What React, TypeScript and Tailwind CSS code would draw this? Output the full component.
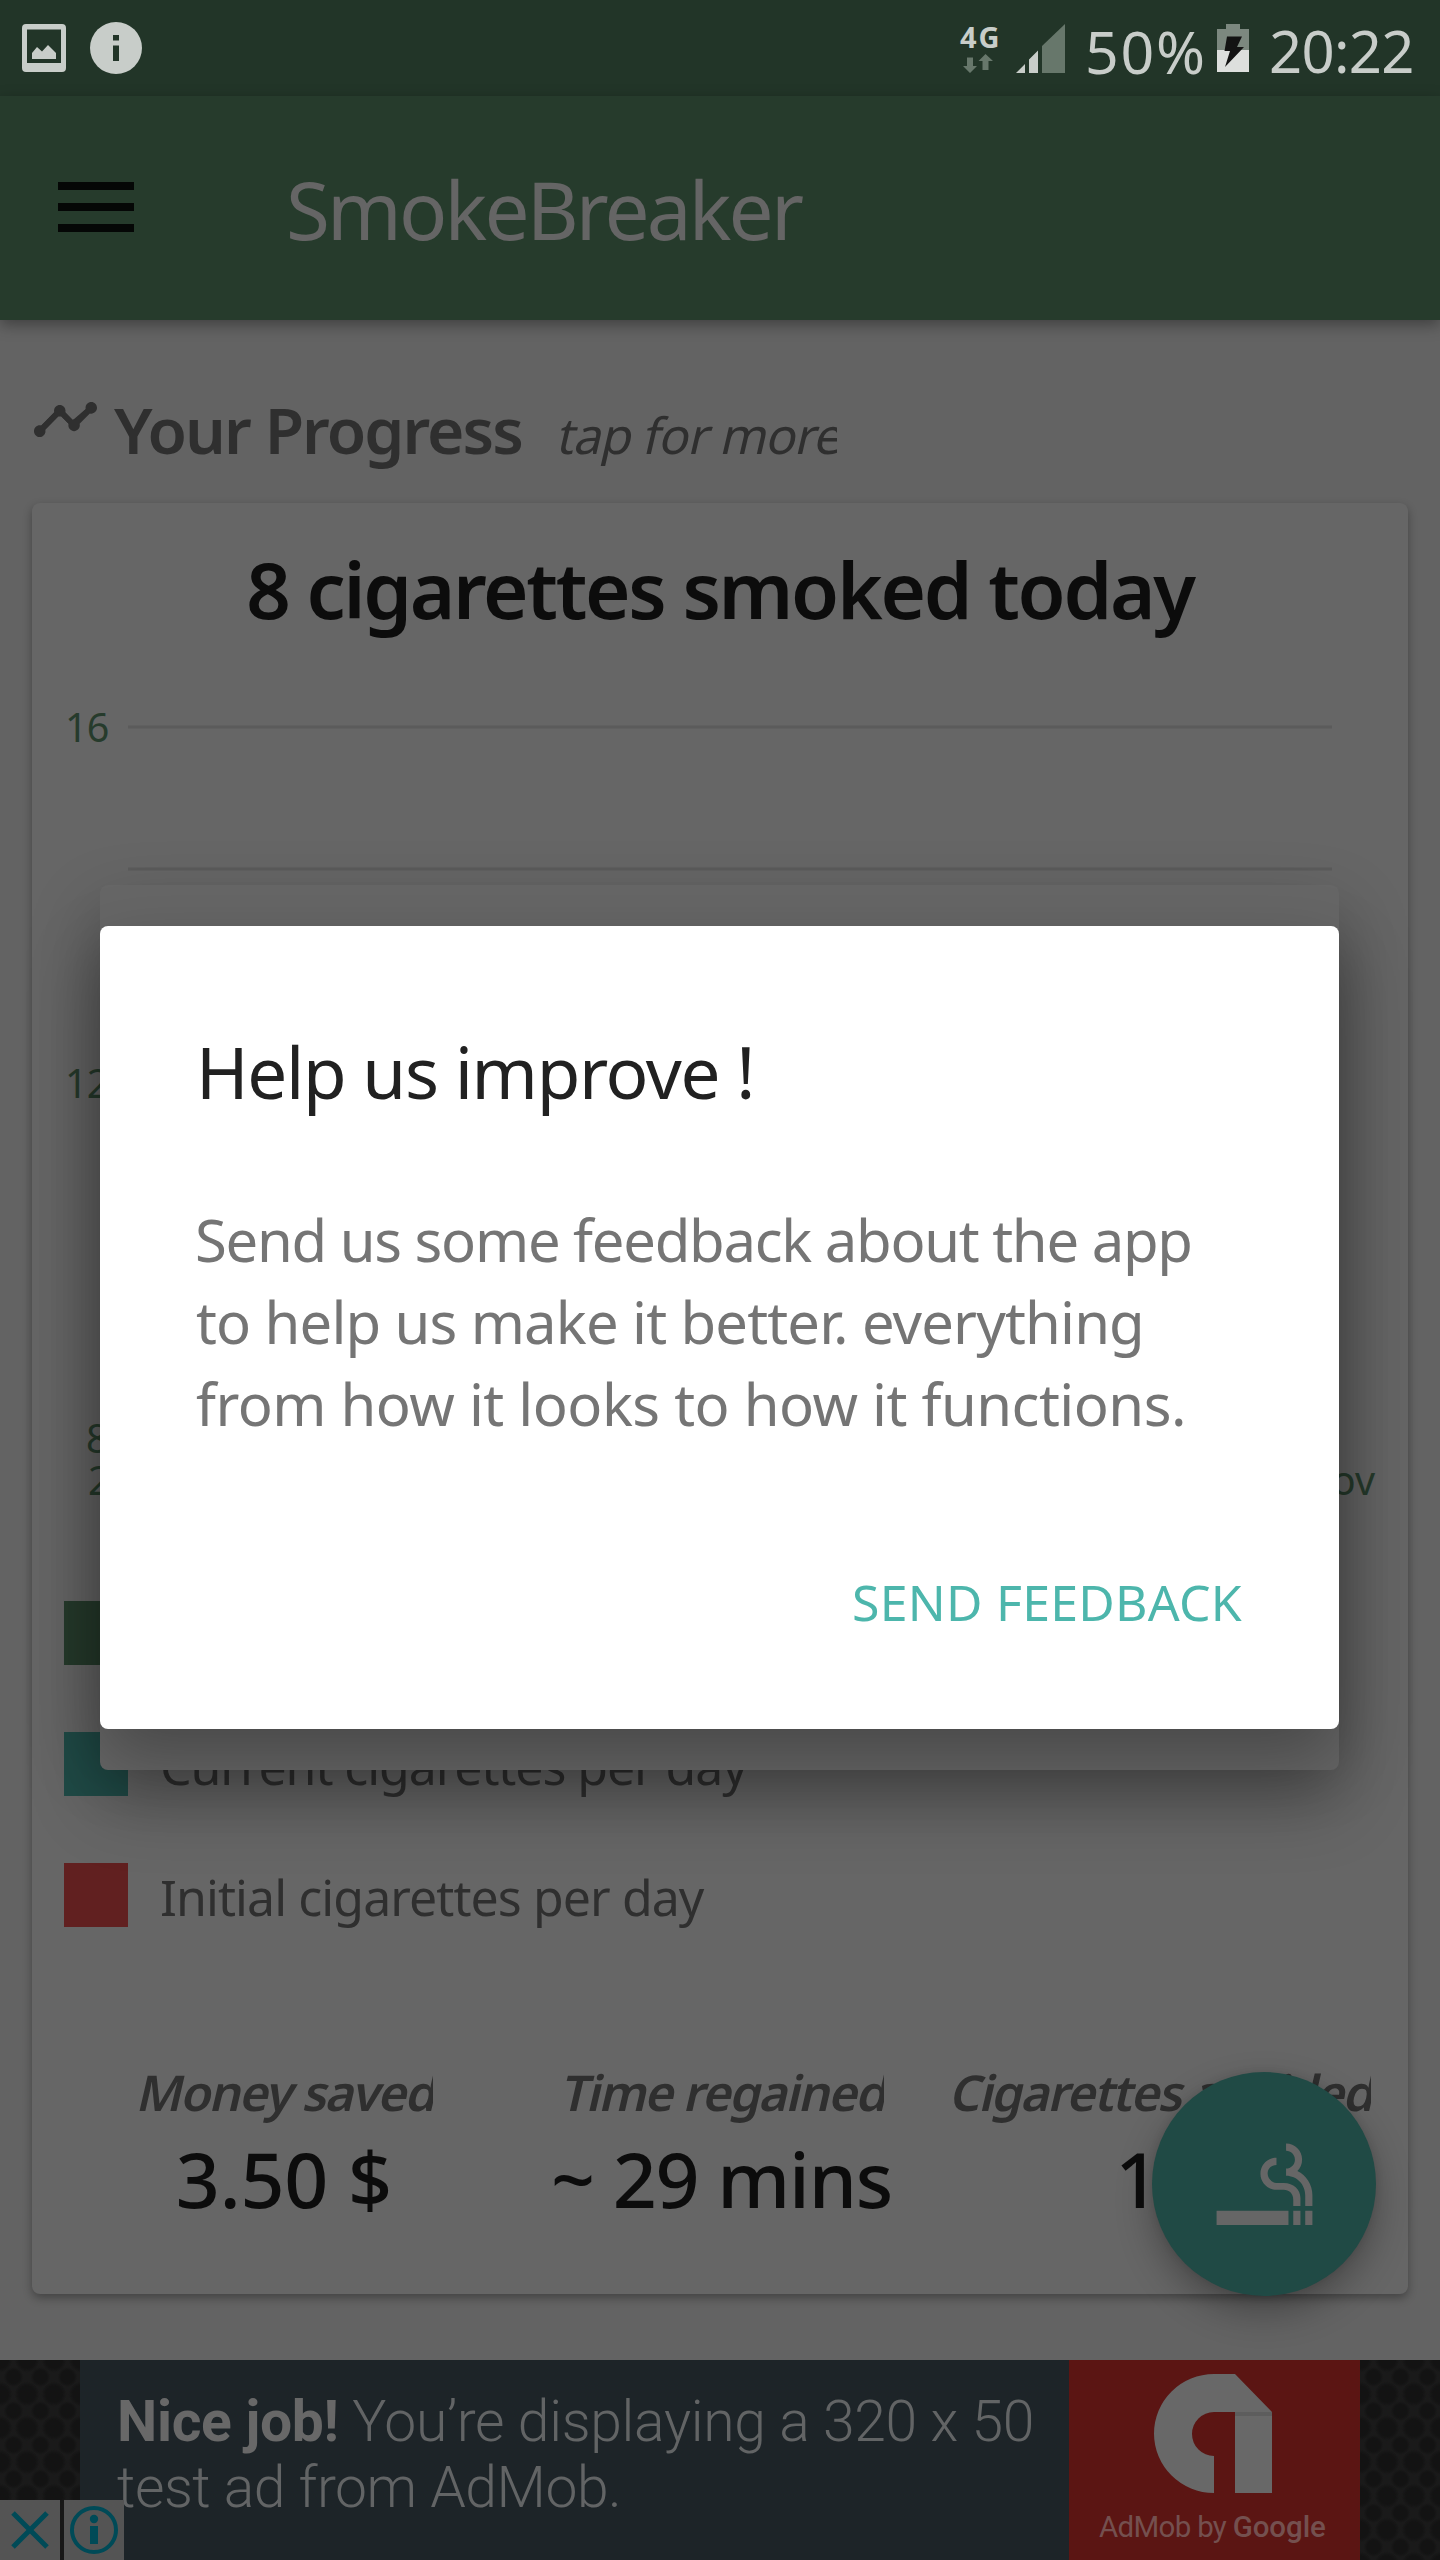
import React from "react";

function StatusBar() {
  return (
    <header className="flex h-24 items-center bg-[#223528] text-[#c8cdc9]">
      <svg className="ml-[22px] h-12 w-11" viewBox="0 0 44 48" fill="currentColor">
        <path
          fillRule="evenodd"
          d="M4 0H40Q44 0 44 4V44Q44 48 40 48H4Q0 48 0 44V4Q0 0 4 0ZM5 5.500V39H39V5.500Z"
        />
        <path d="M10 35V29L15 23L20 27.500L26 21L34 29V35Z" />
      </svg>
      <svg className="ml-6 h-[52px] w-[52px]" viewBox="0 0 52 52">
        <circle cx="26" cy="26" r="26" fill="currentColor" />
        <path d="M23 13h6v5.500h-6zM23 23.500h6V39h-6z" fill="#223528" />
      </svg>
      <div className="ml-auto flex items-center">
        <div className="flex w-[40px] flex-col">
          <span className="mt-[2px] text-[29px] leading-[26px] font-bold tracking-[2px]">4G</span>
          <svg className="mt-1 ml-[3px] h-5 w-[31px]" viewBox="0 0 31 20" fill="#67776b">
            <path d="M4 3.500h6V12h4L7 19L0 12h4zM19.500 16h6V7h4.500L22.500 0L15.500 7h4z" />
          </svg>
        </div>
        <svg className="ml-4 h-[49px] w-[49px]" viewBox="0 0 49 49">
          <path d="M0 49L9 40V49ZM13 49V35.500L22 26.500V49Z" fill="#c8cdc9" />
          <path d="M26 49V22L49 0V49Z" fill="#67776b" />
        </svg>
        <span className="mt-[5px] ml-[20px] w-[129px] text-[59px] leading-[80px] tracking-[1.800px]">50%</span>
        <svg className="ml-[3px] h-12 w-8" viewBox="0 0 32 48">
          <path d="M0 5H9V0H23V5H32V27H0Z" fill="#7c887f" />
          <path d="M0 26H32V48H0Z" fill="#dddfdd" />
          <path d="M10 12.500H25L20 23H27L8 43L13 27H7.500Z" fill="#131313" />
        </svg>
        <span className="mt-[5px] ml-[20px] w-[171px] text-[58px] leading-[80px] tracking-[-0.700px]">20:22</span>
      </div>
    </header>
  );
}

function AppBar() {
  return (
    <div className="relative z-10 flex h-56 items-center bg-[#263b2c] shadow-[0_5px_14px_rgba(0,0,0,0.35)]">
      <div className="mb-[2px] ml-[58px] flex flex-col gap-[13px]">
        <span className="h-2 w-[76px] bg-[#050706]" />
        <span className="h-2 w-[76px] bg-[#050706]" />
        <span className="h-2 w-[76px] bg-[#050706]" />
      </div>
      <h1 className="mt-[2px] ml-[152px] text-[80px] leading-[110px] tracking-[-2.850px] text-[#656565]">
        SmokeBreaker
      </h1>
    </div>
  );
}

function ProgressHeading() {
  return (
    <div className="flex h-[183px] items-start pl-[34px] pt-[68px] text-[#2f2f2f]">
      <svg className="mt-[14px] h-[35px] w-[63px]" viewBox="1 6 22 12" preserveAspectRatio="none" fill="currentColor">
        <g stroke="currentColor" strokeWidth="0.5">
          <path d="M3 16L10 9L14.500 13.500L21 8" fill="none" strokeWidth="1.900" />
        </g>
        <path d="M23 8c0 1.100-.9 2-2 2-.18 0-.35-.02-.51-.07l-3.560 3.550c.05.16.07.34.07.52 0 1.100-.9 2-2 2s-2-.9-2-2c0-.18.02-.36.07-.52l-2.550-2.550c-.16.05-.34.07-.52.07s-.36-.02-.52-.07l-4.550 4.560c.05.16.07.33.07.51 0 1.100-.9 2-2 2s-2-.9-2-2 .9-2 2-2c.18 0 .35.02.51.07l4.560-4.550C8.020 9.360 8 9.180 8 9c0-1.100.9-2 2-2s2 .9 2 2c0 .18-.02.36-.07.52l2.550 2.550c.16-.05.34-.07.52-.07s.36.02.52.07l3.550-3.560C19.020 8.350 19 8.180 19 8c0-1.100.9-2 2-2s2 .9 2 2z" />
      </svg>
      <h2 className="mt-[2px] ml-[17px] w-[412px] text-[64px] leading-[80px] font-semibold tracking-[-1.900px] whitespace-nowrap">
        Your Progress
      </h2>
      <div className="mt-[15px] ml-[29px] w-[282px] overflow-hidden whitespace-nowrap">
        <span className="inline-block origin-[50%_80%] -skew-x-[13deg] text-[50px] leading-[64px] tracking-[-0.950px]">
          tap for more
        </span>
      </div>
    </div>
  );
}

function Chart() {
  return (
    <svg
      className="block h-[962px] w-full text-[39.5px]"
      viewBox="32 639 1376 962"
      fill="#263b2c"
      fontFamily="'Noto Sans', sans-serif"
    >
      <path d="M128 727H1332M128 869H1332" stroke="#5b5b5b" strokeWidth="3" />
      <text x="65" y="742" letterSpacing="-0.9">16</text>
      <text x="65" y="1098" letterSpacing="-0.9">12</text>
      <text x="86" y="1453">8</text>
      <text x="88" y="1495">2</text>
      <text x="1375" y="1495" textAnchor="end">ov</text>
    </svg>
  );
}

function Legend() {
  return (
    <div className="flex flex-col gap-[67px] pl-8 text-[50px] leading-[64px] whitespace-nowrap text-[#2f2f2f]">
      <div className="h-16 w-16 bg-[#263b2c]" />
      <div className="flex h-16 items-center">
        <span className="h-16 w-16 bg-[#204b47]" />
        <span className="mt-[3px] ml-8 tracking-[-1.080px]">Current cigarettes per day</span>
      </div>
      <div className="flex h-16 items-center">
        <span className="h-16 w-16 bg-[#612020]" />
        <span className="mt-[3px] ml-8 tracking-[-0.920px]">Initial cigarettes per day</span>
      </div>
    </div>
  );
}

function StatLabel({ children }: { children: React.ReactNode }) {
  return (
    <div className="overflow-hidden whitespace-nowrap text-[#2f2f2f]">
      <span className="inline-block origin-[50%_80%] -skew-x-[13deg] text-[49.5px] leading-[64px] font-semibold tracking-[-1.650px]">
        {children}
      </span>
    </div>
  );
}

function Stats() {
  return (
    <div className="mt-[133px] ml-[33px] grid w-[1313px] grid-cols-3 gap-y-0 text-[#0c0c0c]">
      <div className="flex flex-col items-center">
        <StatLabel>Money saved</StatLabel>
        <span className="mt-[6px] text-[77px] leading-[98px] font-medium tracking-[-0.200px] whitespace-nowrap">
          3.50 $
        </span>
      </div>
      <div className="flex flex-col items-center">
        <StatLabel>Time regained</StatLabel>
        <span className="mt-[6px] text-[77px] leading-[98px] font-medium tracking-[-1.150px] whitespace-nowrap">
          ~ 29 mins
        </span>
      </div>
      <div className="flex flex-col items-center">
        <StatLabel>Cigarettes avoided</StatLabel>
        <span className="mt-[6px] w-[88px] text-[77px] leading-[98px] font-medium">1</span>
      </div>
    </div>
  );
}

function Fab() {
  return (
    <button className="absolute top-[2072px] left-[1152px] flex h-56 w-56 items-center justify-center rounded-full bg-[#204a45] shadow-[0_16px_36px_rgba(0,0,0,0.3),0_0_8px_rgba(0,0,0,0.1)]">
      <svg className="mt-[15px] h-[115px] w-[115px]" viewBox="0 0 24 24" fill="#666666">
        <path d="M2 16h15v3H2zM20.500 16H22v3h-1.500zM18 16h1.500v3H18zM18.850 7.730c.62-.61 1-1.450 1-2.380C19.850 3.500 18.350 2 16.500 2v1.500c1.020 0 1.850.83 1.850 1.850S17.520 7.200 16.500 7.200v1.500c2.240 0 4 1.830 4 4.070V15H22v-2.240c0-2.220-1.280-4.140-3.150-5.030zM16.030 10.200H14.500c-1.020 0-1.850-.98-1.850-2s.83-1.750 1.850-1.750v-1.500c-1.850 0-3.350 1.500-3.350 3.350s1.500 3.350 3.350 3.350h1.530c1.050 0 1.970.74 1.970 2.050V15h1.500v-1.640c0-1.810-1.460-3.160-3.470-3.160z" />
      </svg>
    </button>
  );
}

function Texture() {
  return (
    <div className="h-full w-20 bg-[#1a1a1a] bg-[radial-gradient(circle_at_50%_50%,#131313_0,#131313_30%,transparent_46%),radial-gradient(circle_at_0_0,#131313_0,#131313_19%,transparent_29%),radial-gradient(circle_at_100%_0,#131313_0,#131313_19%,transparent_29%),radial-gradient(circle_at_0_100%,#131313_0,#131313_19%,transparent_29%),radial-gradient(circle_at_100%_100%,#131313_0,#131313_19%,transparent_29%)] bg-[length:27px_34px]" />
  );
}

function AdBanner() {
  return (
    <div className="relative mt-[66px] flex h-[200px] font-['Roboto',sans-serif] text-[#626465]">
      <Texture />
      <div className="w-[989px] bg-[#1d2428] pt-[29px] pl-[37px] text-[57px] leading-[66px] font-light whitespace-nowrap">
        <p className="tracking-[-0.310px]">
          <b className="font-bold text-[#686868]">Nice job!</b> You’re displaying a 320 x 50
        </p>
        <p className="tracking-[-0.450px]">test ad from AdMob.</p>
      </div>
      <div className="flex w-[291px] flex-col bg-[#5b1513]">
        <svg className="mt-[14px] ml-[85px] h-[120px] w-[119px]" viewBox="0 0 119 120">
          <path d="M60 119A60 59.500 0 0 1 60 0H81L118 38V119H81V38H60A22 22 0 0 0 60 82Z" fill="#686868" />
          <path d="M81 38H118V42H81Z" fill="#5d5d5d" />
        </svg>
        <p className="mt-[15px] ml-[30px] text-[29.5px] leading-[36px] tracking-[-0.700px] whitespace-nowrap text-[#74504f]">
          AdMob by <span className="font-medium tracking-[-0.100px]">Google</span>
        </p>
      </div>
      <Texture />
      <div className="absolute bottom-0 left-0 flex gap-1 bg-[#171717]">
        <span className="flex h-[60px] w-[60px] items-center justify-center bg-[#545454]">
          <svg className="h-[38px] w-[38px]" viewBox="0 0 38 38" stroke="#004a57" strokeWidth="5">
            <path d="M2 2L36 36M36 2L2 36" />
          </svg>
        </span>
        <span className="flex h-[60px] w-[60px] items-center justify-center bg-[#545454]">
          <svg className="h-12 w-12" viewBox="0 0 48 48" fill="#004a57">
            <circle cx="24" cy="24" r="22" fill="none" stroke="#004a57" strokeWidth="4" />
            <circle cx="24" cy="13" r="4.200" />
            <path d="M20 20h8v18h-8z" />
          </svg>
        </span>
      </div>
    </div>
  );
}

function FeedbackDialog() {
  return (
    <>
      <div className="absolute top-[885px] left-[100px] h-[885px] w-[1239px] rounded-lg bg-[#666666] shadow-[0_30px_70px_rgba(0,0,0,0.3)]" />
      <div
        role="dialog"
        className="absolute top-[926px] left-[100px] h-[803px] w-[1239px] rounded-lg bg-white pt-[98px] pr-[97px] pl-24 whitespace-nowrap shadow-[0_30px_70px_rgba(0,0,0,0.3)]"
      >
        <h3 className="text-[71px] leading-[96px] tracking-[-1.350px] text-[#212121]">Help us improve !</h3>
        <div className="mt-[79px] text-[58px] leading-[82px] text-[#757575]">
          <p className="-ml-px tracking-[-1.280px]">Send us some feedback about the app</p>
          <p className="tracking-[-0.850px]">to help us make it better. everything</p>
          <p className="tracking-[-0.520px]">from how it looks to how it functions.</p>
        </div>
        <div className="mt-[125px] flex justify-end">
          <button className="text-[50px] leading-[64px] tracking-[0.240px] text-[#4db6ac]">SEND FEEDBACK</button>
        </div>
      </div>
    </>
  );
}

export default function App() {
  return (
    <main className="relative h-[2560px] w-[1440px] overflow-hidden bg-[#636363] font-['Noto_Sans',sans-serif]">
      <StatusBar />
      <AppBar />
      <ProgressHeading />
      <section className="mx-8 h-[1791px] rounded-lg bg-[#666666] pt-9 shadow-[0_4px_10px_rgba(0,0,0,0.32)]">
        <h2 className="text-center text-[78px] leading-[100px] font-semibold tracking-[-2.320px] whitespace-nowrap text-[#0c0c0c]">
          8 cigarettes smoked today
        </h2>
        <Chart />
        <Legend />
        <Stats />
      </section>
      <AdBanner />
      <Fab />
      <FeedbackDialog />
    </main>
  );
}
